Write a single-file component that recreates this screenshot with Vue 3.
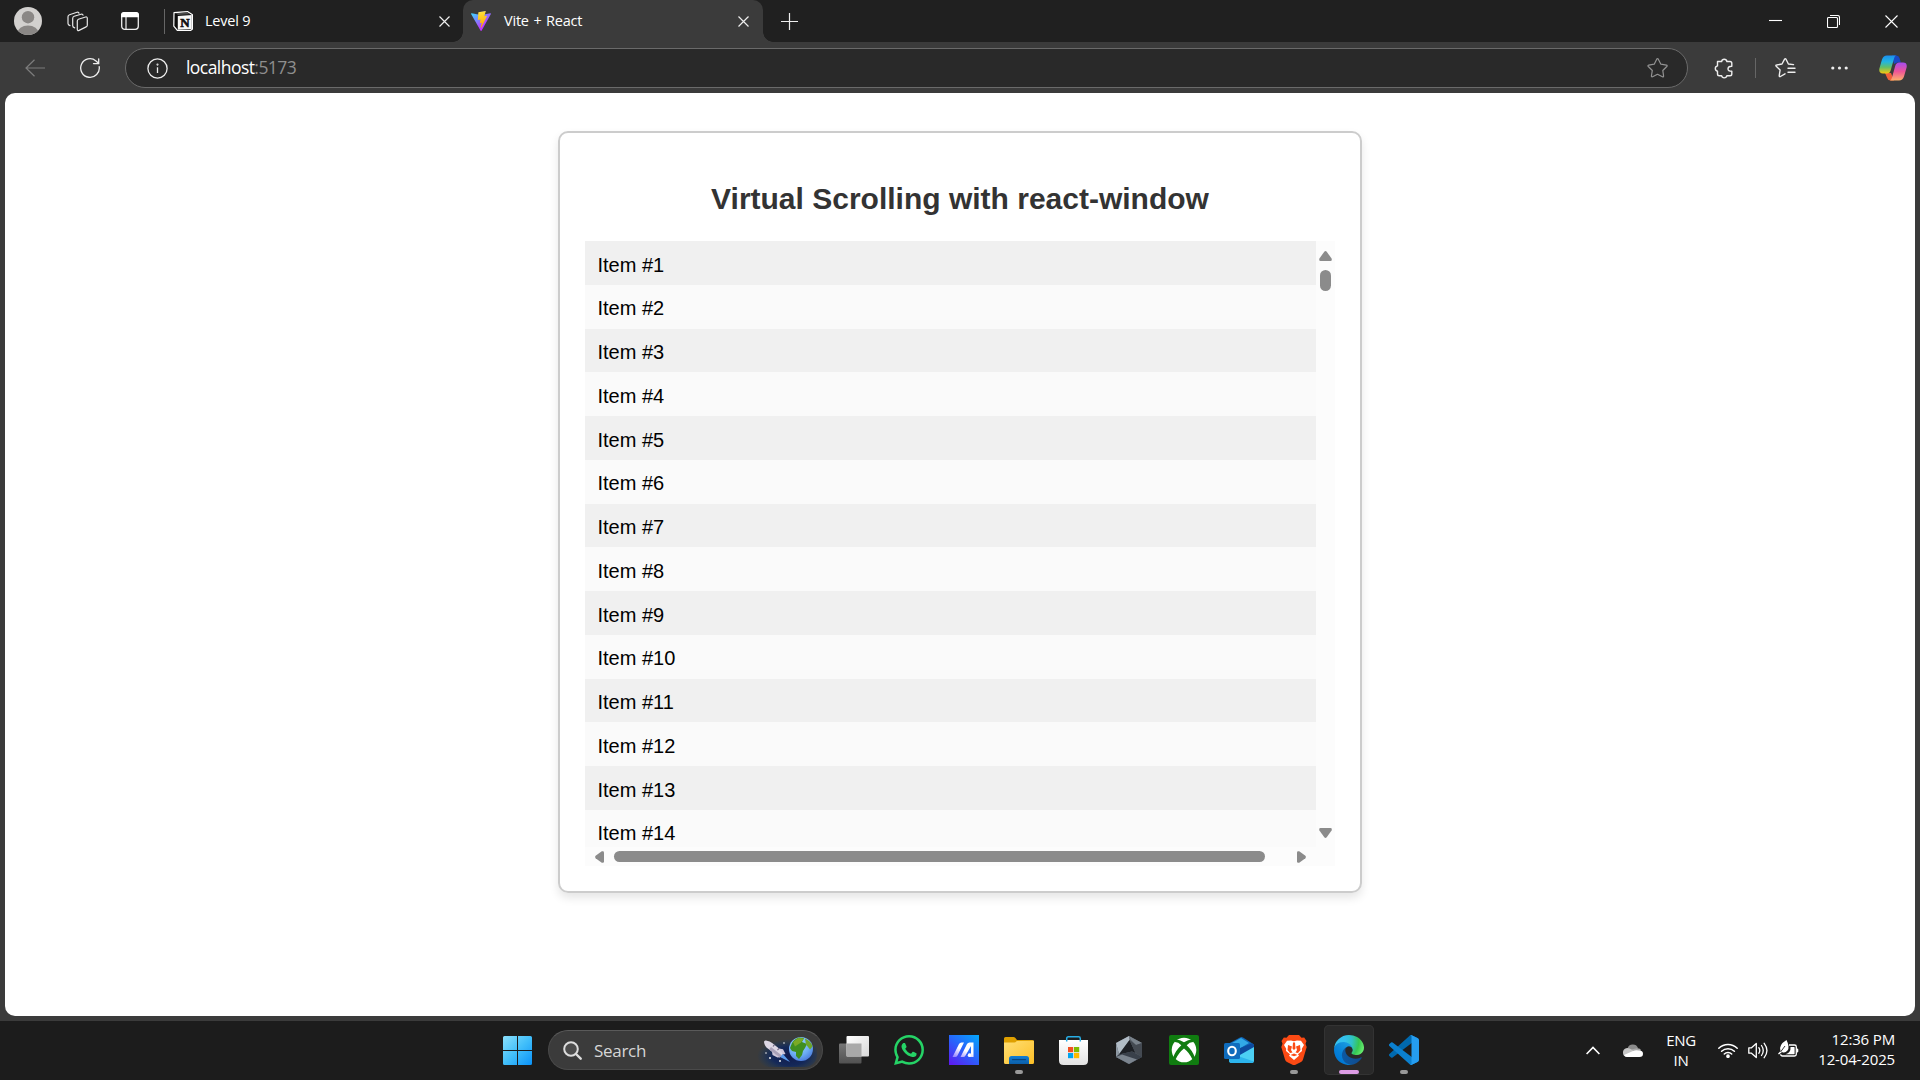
<script setup>
const items = Array.from({ length: 14 }, (_, i) => i + 1)
</script>

<template>
  <div class="screen">
    <header class="tabbar">
      <svg class="avatar" width="28" height="28" viewBox="0 0 28 28">
        <defs><clipPath id="face"><circle cx="14" cy="14" r="14" /></clipPath></defs>
        <g clip-path="url(#face)">
          <rect width="28" height="28" fill="#d2d0ce" />
          <circle cx="14" cy="10.2" r="6.2" fill="#8a8785" />
          <ellipse cx="14" cy="26" rx="10.6" ry="7.6" fill="#8a8785" />
        </g>
      </svg>
      <svg class="workspaces" width="21" height="21" viewBox="0 0 21 21" fill="none" stroke="#e6e6e6" stroke-width="1.2" stroke-linejoin="round" stroke-linecap="round">
        <path d="M11.4 8.2l7.2-2.2q1.7-.4 1.7 1.3v7q0 1.2-1.2 1.6l-7 3.5q-1.8.8-1.8-1.1v-8.2q0-1.5 1.1-1.9z" />
        <path d="M16 4.200q-.4-1.500-2-1L7.200 5.300Q5.700 5.800 5.700 7.400v7.400q0 1.500 2 2" />
        <path d="M12 2.200q-.5-1.500-2-1L2.500 3.700Q1 4.200 1 5.800v6.800q0 1.500 2 2" />
      </svg>
      <svg class="vtabs" width="18" height="18" viewBox="0 0 18 18" fill="none">
        <rect x=".7" y=".7" width="16.600" height="16.600" rx="3" stroke="#eee" stroke-width="1.300" />
        <path d="M0 5.300V3q0-3 3-3h12q3 0 3 3v2.300z" fill="#fff" />
        <path d="M5 5v12.500" stroke="#eee" stroke-width="1.200" />
      </svg>
      <i class="divider"></i>
      <div class="tab idle">
        <svg width="20" height="20" viewBox="0 0 20 20">
          <path d="M1 1.700 14.500.6 19.500 3.800V18L17.500 19.400 4.600 19.700.8 15.200z" fill="#0b0b0b" stroke="#fff" stroke-width="1.200" stroke-linejoin="round" />
          <path d="M4.800 4.900 18.800 4.100V18.100L4.800 18.800z" fill="#f8f8f8" />
          <path d="M2.600 2.300 14.200 1.400 17 3.200 5 3.900z" fill="#4a4a4a" />
          <text x="11.900" y="16.300" text-anchor="middle" font-family="Liberation Serif, serif" font-weight="700" font-size="13" fill="#111" stroke="#111" stroke-width=".6">N</text>
        </svg>
        <span class="label t1">Level 9</span>
        <svg class="x" width="11" height="11" viewBox="0 0 11 11"><path d="M.5.5l10 10M10.500.5l-10 10" /></svg>
      </div>
      <div class="tab active">
        <svg width="20" height="20" viewBox="0 0 256 257">
          <defs>
            <linearGradient id="va" x1="-.8%" x2="57.600%" y1="7.600%" y2="78.400%"><stop offset="0" stop-color="#41D1FF" /><stop offset="1" stop-color="#BD34FE" /></linearGradient>
            <linearGradient id="vb" x1="43.300%" x2="50.300%" y1="2.200%" y2="89%"><stop offset="0" stop-color="#FFEA83" /><stop offset=".083" stop-color="#FFDD35" /><stop offset="1" stop-color="#FFA800" /></linearGradient>
          </defs>
          <path fill="url(#va)" d="M255.153 37.938L134.897 252.976c-2.483 4.440-8.862 4.466-11.382.048L.875 37.958c-2.746-4.814 1.371-10.646 6.827-9.670l120.385 21.517a6.537 6.537 0 0 0 2.322-.004l117.867-21.483c5.438-.991 9.574 4.796 6.877 9.620Z" />
          <path fill="url(#vb)" d="M185.432.063L96.440 17.501a3.268 3.268 0 0 0-2.634 3.014l-5.474 92.456a3.268 3.268 0 0 0 3.997 3.378l24.777-5.718c2.318-.535 4.413 1.507 3.936 3.838l-7.361 36.047c-.495 2.426 1.782 4.500 4.151 3.780l15.304-4.649c2.372-.720 4.652 1.360 4.150 3.788l-11.698 56.621c-.732 3.542 3.979 5.473 5.943 2.437l1.313-2.028l72.516-144.720c1.215-2.423-.880-5.186-3.540-4.672l-25.505 4.922c-2.396.462-4.435-1.770-3.759-4.114l16.646-57.705c.677-2.350-1.370-4.583-3.769-4.113Z" />
        </svg>
        <span class="label t2">Vite + React</span>
        <svg class="x" width="11" height="11" viewBox="0 0 11 11"><path d="M.5.5l10 10M10.500.5l-10 10" /></svg>
      </div>
      <svg class="plus" width="17" height="17" viewBox="0 0 17 17"><path d="M0 8.500h17M8.500 0v17" stroke="#eee" stroke-width="1.200" /></svg>
      <div class="winctl">
        <svg width="13" height="13" viewBox="0 0 13 13"><path d="M0 5.500h13" /></svg>
        <svg width="13" height="13" viewBox="0 0 13 13"><rect x=".5" y="2.500" width="10" height="10" rx="1" /><path d="M3 .5h7.500q2 0 2 2V10" /></svg>
        <svg width="13" height="13" viewBox="0 0 13 13"><path d="M.5.5l12 12M12.500.5l-12 12" /></svg>
      </div>
    </header>

    <nav class="toolbar">
      <svg class="back" width="20" height="18" viewBox="0 0 20 18" fill="none" stroke="#7d7d7d" stroke-width="1.200"><path d="M9.500.7 1 9l8.500 8.300M1 9h19" /></svg>
      <svg class="reload" width="20" height="20" viewBox="0 0 20 20" fill="none" stroke="#eee" stroke-width="1.300" stroke-linecap="round"><path d="M19.200 8.600A9.300 9.300 0 1 1 16 2.900L18.600 5.300M18.700.8V5.600H13.500" /></svg>
      <div class="address">
        <svg class="info" width="21" height="21" viewBox="0 0 21 21" fill="none" stroke="#eee" stroke-width="1.300"><circle cx="10.500" cy="10.500" r="9.600" /><path d="M10.500 9.300v5.700" /><circle cx="10.500" cy="6.600" r=".4" /></svg>
        <span class="host">localhost</span><span class="port">:5173</span>
        <svg class="star" width="21" height="20" viewBox="0 0 21 20" fill="none" stroke="#929292" stroke-width="1.200" stroke-linejoin="round"><path d="M9.700 1.200q.8-1.200 1.600 0l2.600 5 5.500.9q1.300.3.400 1.400l-4 4 .8 5.600q0 1.200-1.200.7l-4.900-2.500-4.900 2.500q-1.200.4-1.200-.7l.9-5.600-4-4q-.9-1 .4-1.400l5.500-.9z" /></svg>
      </div>
      <svg class="puzzle" width="20" height="21" viewBox="0 0 20 21" fill="none" stroke="#eee" stroke-width="1.400" stroke-linejoin="round"><path d="M3.500 3.500H7.600A2.700 2.700 0 0 1 12.900 3.500H16q1.800 0 1.800 1.800V8.200Q14.300 8 14 10.600T17.800 13.200V15.900q0 1.800-1.800 1.800H12.900A2.700 2.700 0 0 1 7.600 17.700H5.300q-1.800 0-1.800-1.800V13.200A2.700 2.700 0 0 1 3.500 7.900z" /></svg>
      <i class="sep"></i>
      <svg class="favs" width="21" height="20" viewBox="0 0 21 20" fill="none" stroke="#eee" stroke-width="1.400" stroke-linejoin="round" stroke-linecap="round"><path d="M18.500 6.600 13.400 6 11 1.200q-.7-1-1.400 0L7 6 1.600 7q-1.300.2-.4 1.200L5.100 12l-.9 5.800q0 1.200 1.200.7L10 15.800M13 10.200h7M13 14.200h7" /></svg>
      <svg class="dots" width="17" height="4" viewBox="0 0 17 4" fill="#eee"><circle cx="1.800" cy="2" r="1.600" /><circle cx="8.500" cy="2" r="1.600" /><circle cx="15.200" cy="2" r="1.600" /></svg>
      <svg class="copilot" width="28" height="26" viewBox="0 0 28 26">
        <defs>
          <linearGradient id="ca" x1="0" y1="0" x2="0" y2="1"><stop offset="0" stop-color="#1b8ff0" /><stop offset=".35" stop-color="#22b5e0" /><stop offset=".65" stop-color="#62bf68" /><stop offset="1" stop-color="#f8c70d" /></linearGradient>
          <linearGradient id="cb" x1="0" y1="0" x2="0" y2="1"><stop offset="0" stop-color="#a54cf0" /><stop offset=".5" stop-color="#ee5497" /><stop offset="1" stop-color="#fdb06a" /></linearGradient>
        </defs>
        <path d="M13 .5h4.500q2.300 0 3 2.500l1.300 4.500h-3.500L15 9z" fill="#1948c4" />
        <path d="M6 18h6l3 7.500h-3.500q-2.500 0-3.300-2.600z" fill="#f0603a" />
        <path d="M8 .5h9q-1.400.7-2 3l-3.200 11.500q-.9 3.500-4 3.500H4q-4.500 0-3.600-5L3 4.500Q4.300.5 8 .5z" fill="url(#ca)" />
        <path d="M20 25.500h-9q1.400-.7 2-3l3.200-11.500q.9-3.500 4-3.500H24q4.500 0 3.600 5L25 21.500q-1.300 4-5 4z" fill="url(#cb)" />
      </svg>
    </nav>

    <main class="page">
      <section class="card">
        <h2>Virtual Scrolling with react-window</h2>
        <div class="list">
          <div class="rows">
            <div v-for="n in items" :key="n" class="row" :class="{ odd: n % 2 }">Item #{{ n }}</div>
          </div>
          <div class="vbar">
            <svg width="13" height="10" viewBox="0 0 13 10"><path d="M5.300.7q1.200-1.200 2.400 0L12.600 7.500Q13.300 10 11.500 10H1.500Q-.3 10 .4 7.500z" /></svg>
            <i class="vthumb"></i>
            <svg class="down" width="13" height="10" viewBox="0 0 13 10"><path d="M5.300 9.300q1.200 1.200 2.400 0L12.600 2.500Q13.300 0 11.500 0H1.500Q-.3 0 .4 2.500z" /></svg>
          </div>
          <div class="hbar">
            <svg width="9" height="12" viewBox="0 0 9 12"><path d="M.6 7.200q-1-1.200 0-2.400L6.800.3Q9-.3 9 1.500v9q0 1.800-2.200 1.200z" /></svg>
            <i class="hthumb"></i>
            <svg class="right" width="9" height="12" viewBox="0 0 9 12"><path d="M8.400 7.200q1-1.200 0-2.400L2.200.3Q0-.3 0 1.500v9q0 1.800 2.200 1.200z" /></svg>
          </div>
        </div>
      </section>
    </main>

    <footer class="taskbar">
      <svg class="start" width="29" height="29" viewBox="0 0 29 29">
        <defs><linearGradient id="win" x1="0" y1="0" x2="29" y2="29" gradientUnits="userSpaceOnUse"><stop offset="0" stop-color="#8be0fb" /><stop offset=".5" stop-color="#42bffa" /><stop offset="1" stop-color="#0a92f8" /></linearGradient></defs>
        <path fill="url(#win)" d="M1.500 0H14v14H0V1.500Q0 0 1.500 0zM15 0h12.500Q29 0 29 1.500V14H15zM0 15h14v14H1.500Q0 29 0 27.500zM15 15h14v12.500q0 1.500-1.500 1.500H15z" />
      </svg>
      <div class="search">
        <svg class="lens" width="19" height="19" viewBox="0 0 19 19" fill="none" stroke="#ddd" stroke-width="2"><circle cx="8" cy="8" r="6.800" fill="#4c4c4c" /><path d="M13 13l4.700 4.700" stroke-width="2.400" stroke-linecap="round" /></svg>
        <span>Search</span>
        <svg class="space" width="60" height="31" viewBox="0 0 60 31">
          <defs>
            <radialGradient id="sky" cx=".55" cy=".65" r=".55"><stop offset="0" stop-color="#101a4c" /><stop offset=".55" stop-color="#10265c" stop-opacity=".9" /><stop offset="1" stop-color="#123a68" stop-opacity="0" /></radialGradient>
            <radialGradient id="sea" cx=".4" cy=".3" r=".8"><stop offset="0" stop-color="#a2dcff" /><stop offset=".6" stop-color="#6aaaf3" /><stop offset="1" stop-color="#4470d6" /></radialGradient>
          </defs>
          <rect width="60" height="31" rx="12" fill="url(#sky)" />
          <path d="M25 17l8 9-10-5z" fill="#5b9bea" />
          <path d="M7 6q0-1.800 2-1.500 4 .8 6.500 2.800L27 16.500l-4.500 5L11.500 13Q7.500 10.500 7 6z" fill="#ddd7e4" />
          <path d="M12 13.400 22.500 21.500 24.500 19.200 14 11z" fill="#a9a1b8" />
          <path d="M15 15.500l.5 3.500 5 2.500 2-.3zM22 12.500l4 .8 2.500 4.700-2 .5z" fill="#cfc7da" />
          <path d="M16 10.500l1.500-1.800M20.500 14.200l1.500-1.800" stroke="#6d6480" stroke-width="1.100" />
          <g fill="#eee"><circle cx="27" cy="7" r=".8" /><circle cx="9" cy="17" r=".8" /><circle cx="13" cy="22" r="1" /><circle cx="23" cy="25" r="1" /></g>
          <circle cx="44" cy="13" r="12" fill="url(#sea)" />
          <path d="M35 7q2-4 7-5.500l5 .6-2 4 5 2-2 4-2 3-1 4-3 4-3-3v-4l-4-1-2-3z" fill="#3f8f20" />
          <path d="M48 2.500q6 2.500 7.500 8l-2.500 3-4-5z" fill="#6da52b" /><path d="M36 6l5-4 6 .5-3 4-6 4z" fill="#7aaa25" />
        </svg>
      </div>
      <div class="app"><svg width="30" height="28" viewBox="0 0 30 28">
        <defs><linearGradient id="tv" x1="0" y1="0" x2="1" y2="1"><stop offset="0" stop-color="#fff" /><stop offset="1" stop-color="#d8d8d8" /></linearGradient><linearGradient id="tw" x1="0" y1="0" x2="0" y2="1"><stop offset="0" stop-color="#777" /><stop offset="1" stop-color="#515151" /></linearGradient></defs>
        <rect x="0" y="7.500" width="22.500" height="20" rx="1" fill="url(#tw)" /><rect x="7.500" y="0" width="22.500" height="20.500" rx="1" fill="url(#tv)" /><path d="M7.500 7.500h15v13h-15z" fill="#a9a9a9" />
      </svg></div>
      <div class="app"><svg width="30" height="30" viewBox="0 0 24 24" fill="#25d366"><path d="M17.472 14.382c-.297-.149-1.758-.867-2.030-.967-.273-.099-.471-.148-.670.150-.197.297-.767.966-.940 1.164-.173.199-.347.223-.644.075-.297-.150-1.255-.463-2.390-1.475-.883-.788-1.480-1.761-1.653-2.059-.173-.297-.018-.458.130-.606.134-.133.298-.347.446-.520.149-.174.198-.298.298-.497.099-.198.050-.371-.025-.520-.075-.149-.669-1.612-.916-2.207-.242-.579-.487-.500-.669-.510-.173-.008-.371-.010-.570-.010-.198 0-.520.074-.792.372-.272.297-1.040 1.016-1.040 2.479 0 1.462 1.065 2.875 1.213 3.074.149.198 2.096 3.200 5.077 4.487.709.306 1.262.489 1.694.625.712.227 1.360.195 1.871.118.571-.085 1.758-.719 2.006-1.413.248-.694.248-1.289.173-1.413-.074-.124-.272-.198-.570-.347m-5.421 7.403h-.004a9.870 9.870 0 01-5.031-1.378l-.361-.214-3.741.982.998-3.648-.235-.374a9.860 9.860 0 01-1.510-5.260c.001-5.450 4.436-9.884 9.888-9.884 2.640 0 5.122 1.030 6.988 2.898a9.825 9.825 0 012.893 6.994c-.003 5.450-4.437 9.884-9.885 9.884m8.413-18.297A11.815 11.815 0 0012.050 0C5.495 0 .160 5.335.157 11.892c0 2.096.547 4.142 1.588 5.945L.057 24l6.305-1.654a11.882 11.882 0 005.683 1.448h.005c6.554 0 11.890-5.335 11.893-11.893a11.821 11.821 0 00-3.480-8.413z" /></svg></div>
      <div class="app"><svg width="30" height="30" viewBox="0 0 30 30">
        <defs><linearGradient id="as" x1=".9" y1="0" x2=".1" y2="1"><stop offset="0" stop-color="#06a2fb" /><stop offset=".5" stop-color="#2a62fb" /><stop offset="1" stop-color="#5c1cf0" /></linearGradient><linearGradient id="at" x1="0" y1="1" x2=".6" y2="0"><stop offset="0" stop-color="#8f7cff" /><stop offset=".6" stop-color="#fff" /></linearGradient></defs>
        <rect width="30" height="30" fill="url(#as)" />
        <path d="M3.500 22 10 9Q10.800 7.500 12.500 7.500H15L8.500 20.500Q7.700 22 6 22zM11.500 22 18 9Q18.800 7.500 20.500 7.500H24.500V22H19.500v-3.500H22V11L16.500 20.500Q15.700 22 14 22z" fill="url(#at)" /><circle cx="20.500" cy="20.300" r="1.700" fill="#fff" />
      </svg></div>
      <div class="app"><svg width="30" height="27" viewBox="0 0 30 27">
        <defs><linearGradient id="fo" x1="0" y1="0" x2="1" y2="1"><stop offset="0" stop-color="#ffdf75" /><stop offset="1" stop-color="#fdbf26" /></linearGradient><linearGradient id="fp" x1="0" y1="0" x2="0" y2="1"><stop offset="0" stop-color="#127fd6" /><stop offset="1" stop-color="#0b5ea8" /></linearGradient></defs>
        <path d="M1.500 0h8q1 0 1.700.8L13 3h15.500Q30 3 30 4.500V15H0V1.500Q0 0 1.500 0z" fill="#dfa000" />
        <path d="M0 5.500h10.500q1 0 1.500-.7L12.800 4 30 3.700v21.800Q30 27 28.500 27h-27Q0 27 0 25.500z" fill="url(#fo)" />
        <path d="M5 27v-5.500Q5 19 7.500 19h15q2.500 0 2.500 2.500V27z" fill="url(#fp)" /><path d="M8.500 22.700h13" stroke="#0a467f" stroke-width="1.200" stroke-linecap="round" />
      </svg><i class="run"></i></div>
      <div class="app store"><svg width="29" height="29" viewBox="0 0 29 29">
        <defs><linearGradient id="st" x1="0" y1="0" x2="0" y2="1"><stop offset="0" stop-color="#fff" /><stop offset="1" stop-color="#e2e2e2" /></linearGradient></defs>
        <path d="M0 4h29v20.500Q29 29 24.500 29h-20Q0 29 0 24.500z" fill="url(#st)" /><path d="M7.700 5.500V2.500q0-1.700 1.700-1.700h10.200q1.700 0 1.700 1.700v3" fill="none" stroke="#28aee5" stroke-width="1.500" />
        <path d="M9 11h5.200v5.200H9z" fill="#f25022" /><path d="M15 11h5.200v5.200H15z" fill="#7fba00" /><path d="M9 17h5.200v5.200H9z" fill="#00a4ef" /><path d="M15 17h5.200v5.200H15z" fill="#ffb900" />
      </svg></div>
      <div class="app"><svg width="26" height="28" viewBox="0 0 26 28">
        <path d="M13 0 26 7v14l-13 7L0 21V7z" fill="#596069" />
        <path d="M13 0 26 7l-6 2-5-5z" fill="#79828b" />
        <path d="M13 0 0 7l3 11L13.500 4z" fill="#b1bcc6" />
        <path d="M0 7l3 11-3 3z" fill="#8d98a3" />
        <path d="M13.500 4 3 18.500 16 15.500 19.500 17z" fill="#1d2025" />
        <path d="M13.500 4 20 9l6-2v14l-6.500-4z" fill="#444a52" />
        <path d="M3 18.500 16 15.500 26 21l-13 7L0 21z" fill="#39404a" />
        <path d="M0 21l6-2.500L21 23.500 13 28z" fill="#7b848e" />
      </svg></div>
      <div class="app"><svg width="30" height="30" viewBox="0 0 30 30">
        <rect width="30" height="30" rx="2" fill="#107c10" /><circle cx="15" cy="15" r="12.300" fill="#fff" />
        <path d="M6.500 4.500Q10 4 15 7.300 20 4 23.500 4.500L25 7Q21 6.500 17.700 10.200 24 16 25.800 22.500l-2.200 2.300Q20.500 17.800 15 13.500 9.500 17.800 6.400 24.800L4.200 22.500Q6 16 12.300 10.200 9 6.500 5 7z" fill="#107c10" />
      </svg></div>
      <div class="app"><svg width="30" height="30" viewBox="0 0 30 30">
        <path d="M4 9 16 2.500Q17.500 1.700 19 2.500L30 9.500 18 20 4 17z" fill="#1066b8" /><path d="M8 8 17 3 25 8 13 15z" fill="#32a9e7" /><path d="M14 14 28 8.300l2 1.500v8L15 24z" fill="#0d4a9e" /><path d="M5 19l10 1.500L30 12v13.500q0 2.500-2.500 2.500h-20Q5 28 5 25z" fill="#4cd0f4" /><path d="M5 18l25 8.500Q29 28 27.500 28h-20Q5 28 5 25z" fill="#2cb4ec" />
        <rect x="0" y="8" width="16" height="16" rx="1.500" fill="#0f6cbd" /><ellipse cx="8" cy="16" rx="3.800" ry="4.300" fill="none" stroke="#fff" stroke-width="2.100" />
      </svg></div>
      <div class="app"><svg width="26" height="30" viewBox="0 0 26 30">
        <path d="M8 0h10l2.500 2.800 2.700-.4L25.500 6l-1 2.700L25.700 12 22 24.500Q21.500 26 20 27l-6 3q-1 .4-2 0l-6-3q-1.500-1-2-2.500L.3 12l1.200-3.300L.5 6l2.300-3.600 2.700.4z" fill="#fb4a14" />
        <path d="M13 6.200l3-.7 4 .3L23 10l-2.200 3.800.2 2.200-4 3.200 1 1.600L13 25l-5-4.200 1-1.600L5 16l.2-2.200L3 10l3-4.200 4-.3z" fill="#fff" />
        <path d="M7 10l4 1.500-1 3.500 1.500 2.500L9 18l-2.500-3zM19 10l-4 1.500 1 3.500-1.500 2.500L17 18l2.500-3zM12 7.500h2l.5 6L13 15l-1.500-1.500zM9.500 20l3.500-1.500 3.500 1.500-3.500 1.200z" fill="#fb4a14" />
      </svg><i class="run"></i></div>
      <div class="app current"><svg width="30" height="30" viewBox="0 0 256 256">
        <defs>
          <linearGradient id="ea" x1="63.300" y1="168" x2="241.700" y2="168" gradientUnits="userSpaceOnUse"><stop offset="0" stop-color="#0c59a4" /><stop offset="1" stop-color="#114a8b" /></linearGradient>
          <linearGradient id="eb" x1="157" y1="99" x2="46" y2="220" gradientUnits="userSpaceOnUse"><stop offset="0" stop-color="#1b9de2" /><stop offset=".160" stop-color="#1595df" /><stop offset=".670" stop-color="#0680d7" /><stop offset="1" stop-color="#0078d4" /></linearGradient>
          <radialGradient id="ec" cx="25" cy="47" r="235" gradientUnits="userSpaceOnUse"><stop offset="0" stop-color="#35c1f1" /><stop offset=".3" stop-color="#34c1ed" /><stop offset=".55" stop-color="#2fc2c8" /><stop offset=".8" stop-color="#36c752" /><stop offset="1" stop-color="#66eb6e" /></radialGradient>
        </defs>
        <path fill="url(#ea)" d="M231 190.500c-3.400 1.800-6.900 3.400-10.500 4.700a101.500 101.500 0 0 1-35.900 6.400c-47.300 0-88.500-32.500-88.500-74.300a31.500 31.500 0 0 1 16.400-27.300c-42.800 1.800-53.800 46.400-53.800 72.500 0 74 68.100 81.400 82.800 81.400 7.900 0 19.800-2.300 27-4.600l1.300-.4a128.300 128.300 0 0 0 66.600-52.800 4 4 0 0 0-5.400-5.600z" />
        <path fill="url(#eb)" d="M105.700 241.400a79.200 79.200 0 0 1-22.700-21.300 80.700 80.700 0 0 1 29.500-120c3.200-1.500 8.500-4.100 15.600-4a32.400 32.400 0 0 1 25.700 13 31.900 31.900 0 0 1 6.300 18.700c0-.2 24.500-79.600-80-79.600-43.900 0-80 41.600-80 78.200a130.200 130.200 0 0 0 12.100 56 128 128 0 0 0 156.400 67 75.500 75.500 0 0 1-62.800-8z" />
        <path fill="url(#ec)" d="M152.300 148.900c-.9 1-3.400 2.500-3.400 5.600 0 2.600 1.700 5.200 4.800 7.300 14.300 10 41.400 8.600 41.500 8.600 10.700 0 21.100-2.900 30.300-8.300A61.400 61.400 0 0 0 256 109.200c.3-22.400-8-37.300-11.300-43.900C223.500 23.900 177.700 0 128 0A128 128 0 0 0 0 126.200c.5-36.500 36.800-66 80-66 3.500 0 23.500.3 42 10 16.300 8.600 24.900 19 30.800 29.200 6.200 10.700 7.300 24.100 7.300 29.500 0 5.300-2.700 13.300-7.800 19.900z" />
      </svg><i class="run wide"></i></div>
      <div class="app"><svg width="30" height="30" viewBox="0 0 100 100">
        <path fill="#0069ae" d="M96.500 10.800 75.900.9a6.200 6.200 0 0 0-7.100 1.200L1.300 63.600a4.200 4.200 0 0 0 0 6.200l5.500 5a4.200 4.200 0 0 0 5.300.2L93.400 13.400c2.700-2.100 6.600-.1 6.600 3.300z" />
        <path fill="#0b80cf" d="M96.500 89.200 75.900 99.100a6.200 6.200 0 0 1-7.100-1.200L1.300 36.400a4.200 4.200 0 0 1 0-6.200l5.500-5a4.200 4.200 0 0 1 5.300-.2L93.400 86.700c2.700 2.100 6.600.1 6.600-3.300z" />
        <path fill="#259df0" d="M75.900 99.100a6.200 6.200 0 0 1-7.100-1.200c2.300 2.300 6.200.7 6.200-2.600V4.700c0-3.300-3.900-4.900-6.200-2.600A6.200 6.200 0 0 1 75.900.9l20.600 9.900A6.300 6.300 0 0 1 100 16.400v67.200a6.300 6.300 0 0 1-3.500 5.600z" />
      </svg><i class="run"></i></div>

      <div class="tray">
        <svg class="chev" width="14" height="9" viewBox="0 0 14 9" fill="none" stroke="#fff" stroke-width="1.600"><path d="M.6 8 7 1.500 13.400 8" /></svg>
        <svg class="cloud" width="20" height="13" viewBox="0 0 20 13"><path d="M4.500 4.500A5.600 5.600 0 0 1 15 4l-4 4z" fill="#8b8b8b" /><path d="M0 9a4.500 4.500 0 0 1 6.500-4.500L16 9 4 13Q0 12.500 0 9z" fill="#c6c6c6" /><path d="M14 4.300q3-.3 4.200 2l-4 2.500-6-3.300z" fill="#aaa" /><path d="M1 11 10 6.900q3-1 5.500-.3Q20 6.500 20 9.700 20 13 16.500 13H4Q1.800 13 1 11z" fill="#fff" /></svg>
        <div class="lang"><span>ENG</span><span>IN</span></div>
        <svg class="wifi" width="20" height="15" viewBox="0 0 20 15" fill="none" stroke="#fff" stroke-width="1.500" stroke-linecap="round"><path d="M.8 5.300a13 13 0 0 1 18.400 0M3.600 8.300a9 9 0 0 1 12.800 0M6.300 11a5.200 5.200 0 0 1 7.400 0" /><circle cx="10" cy="13.200" r="1.100" fill="#fff" /></svg>
        <svg class="vol" width="20" height="17" viewBox="0 0 20 17" fill="none" stroke="#fff" stroke-width="1.300" stroke-linejoin="round" stroke-linecap="round"><path d="M.8 5.800h2.700L8.300 1.500v14L3.500 11.200H.8zM10.800 5.700q2 2.800 0 5.600M13.500 3.500q3.500 5 0 10M16.200 1.300q5.500 7.200 0 14.400" /></svg>
        <svg class="batt" width="21" height="18" viewBox="0 0 21 18" fill="none"><path d="M11 5h5.500q1.800 0 1.800 1.800v7.400q0 1.800-1.800 1.800h-12q-1.800 0-1.800-1.800" stroke="#fff" stroke-width="1.300" /><path d="M12.500 7h3.700q.4 0 .4.400v6.400q0 .4-.4.400H7.500q5.500-1.500 5-7.200zM19 8.500q1.300 0 1.300 1v2q0 1-1.300 1z" fill="#fff" /><path d="M8.500 0Q12 7 9.500 10.500q-2.500 3-5.500 1.500L1 14.500l-1-.7L2.500 11Q.3 5 8.500 0z" fill="#fff" /><path d="M2.500 12 7 6" stroke="#1c1c1c" stroke-width=".9" /></svg>
        <div class="clock"><span class="time">12:36 PM</span><span class="date">12-04-2025</span></div>
      </div>
    </footer>
  </div>
</template>

<style>
html, body { margin: 0; background: #3b3b3b; overflow: hidden; }
</style>

<style scoped>
.screen { width: 1920px; height: 1080px; display: flex; flex-direction: column; background: #3b3b3b; font-family: "Open Sans", "Noto Sans", sans-serif; color: #fff; overflow: hidden; }
.screen * { box-sizing: border-box; }
svg { display: block; flex: none; }
span { white-space: nowrap; }

.tabbar { height: 42px; flex: none; display: flex; align-items: center; background: #202020; }
.avatar { margin-left: 14px; }
.workspaces { margin-left: 25px; }
.vtabs { margin-left: 33px; }
.divider { width: 1px; height: 25px; background: #666; margin-left: 25px; }
.tab { height: 42px; display: flex; align-items: center; flex: none; }
.idle { width: 298px; padding: 0 13px 0 8px; }
.active { width: 300px; padding: 0 14px 0 8px; background: #3b3b3b; border-radius: 10px 10px 0 0; position: relative; }
.active::before, .active::after { content: ""; position: absolute; bottom: 0; width: 10px; height: 10px; }
.active::before { left: -10px; background: radial-gradient(circle at 0 0, transparent 9.5px, #3b3b3b 10px); }
.active::after { right: -10px; background: radial-gradient(circle at 100% 0, transparent 9.5px, #3b3b3b 10px); }
.label { font-size: 14.5px; line-height: 20px; margin-left: 12px; margin-top: -1px; }
.t1 { letter-spacing: -.2px; }
.t2 { word-spacing: 1px; letter-spacing: -.2px; margin-left: 13px; }
.x { margin-left: auto; margin-top: 1px; fill: none; stroke: #eee; stroke-width: 1.2; }
.plus { margin-left: 18px; }
.winctl { margin-left: auto; display: flex; gap: 45px; margin-right: 22px; margin-top: 1px; }
.winctl svg { fill: none; stroke: #fff; stroke-width: 1.1; }

.toolbar { height: 51px; flex: none; display: flex; align-items: center; padding-top: 1px; }
.back { margin-left: 25px; }
.reload { margin-left: 35px; }
.address { margin-left: 25px; width: 1563px; height: 40px; border: 1px solid #6a6a6a; border-radius: 20px; background: #292929; display: flex; align-items: center; font-size: 17.5px; line-height: 24px; }
.info { margin-left: 21px; }
.host, .port { letter-spacing: -.55px; margin-top: -2px; }
.host { margin-left: 18px; }
.port { color: #8e8e8e; }
.star { margin-left: auto; margin-right: 19px; }
.puzzle { margin-left: 26px; }
.sep { width: 1px; height: 20px; background: #666; margin-left: 21px; }
.favs { margin-left: 19px; }
.dots { margin-left: 35px; }
.copilot { margin-left: 31px; }

.page { height: 923px; flex: none; margin: 0 5px; background: #fff; border-radius: 10px; padding-top: 38px; display: flex; justify-content: center; align-items: flex-start; }
.card { width: 804px; height: 762px; border: 2px solid #ccc; border-radius: 10px; box-shadow: 0 5px 10px rgba(0, 0, 0, .1); padding: 0 25px 25px; display: flex; flex-direction: column; font-family: "Liberation Sans", Arial, sans-serif; }
h2 { margin: 49px 0 0; height: 59px; font-size: 30px; line-height: 34px; text-align: center; color: #333; font-weight: 700; white-space: nowrap; }
.list { width: 750px; height: 625px; display: grid; grid-template-columns: 731px 19px; grid-template-rows: 605.5px 19.5px; background: #fcfcfc; }
.rows { overflow: hidden; }
.row { height: 43.75px; padding: 12.5px 12.5px 0; font-size: 20px; line-height: 23px; color: #000; background: #fafafa; }
.row.odd { background: #f0f0f0; }
.vbar { display: flex; flex-direction: column; align-items: center; padding: 10px 0 8.5px; }
.vbar svg, .hbar svg { fill: #8b8b8b; }
.vthumb { width: 11px; height: 21px; border-radius: 6px; background: #8b8b8b; margin-top: 9px; }
.down { margin-top: auto; }
.hbar { display: flex; align-items: center; padding: 1px 10px 0; }
.hthumb { width: 651px; height: 11px; border-radius: 6px; background: #8b8b8b; margin-left: 10px; }
.right { margin-left: auto; }

.taskbar { margin-top: 5px; height: 59px; flex: none; background: #1c1c1c; display: flex; align-items: center; }
.start { margin-left: 503px; }
.search { margin-left: 16px; width: 275px; height: 40px; border-radius: 20px; background: #3b3b3b; border: 1px solid #4a4a4a; border-top-color: #5a5a5a; display: flex; align-items: center; font-size: 17px; margin-top: -1px; margin-right: 6px; color: #d6d6d6; }
.lens { margin-left: 14px; }
.search span { margin-left: 12px; margin-top: 1px; letter-spacing: -.3px; line-height: 22px; }
.space { margin-left: auto; margin-right: 5px; margin-top: 2px; }
.app { width: 50px; height: 50px; margin-right: 5px; border-radius: 5px; display: flex; align-items: center; justify-content: center; position: relative; margin-top: -1px; }
.store { padding-right: 1px; }
.current { background: #292929; box-shadow: inset 0 0 0 1px #333; }
.run { position: absolute; bottom: 1px; left: 21px; width: 8px; height: 4px; border-radius: 2px; background: #999; }
.wide { left: 15px; width: 20px; background: #dd9ce5; }
.tray { margin-left: auto; margin-right: 25px; display: flex; align-items: center; font-size: 15px; line-height: 20px; }
.cloud { margin-left: 23px; }
.lang { display: flex; flex-direction: column; align-items: center; width: 32px; margin-left: 22px; margin-top: -2px; letter-spacing: -.3px; }
.wifi { margin-left: 21px; }
.vol { margin-left: 10px; }
.batt { margin-left: 10px; margin-top: -3px; }
.clock { display: flex; flex-direction: column; align-items: flex-end; width: 96px; margin-top: -4px; letter-spacing: -.15px; }
</style>
